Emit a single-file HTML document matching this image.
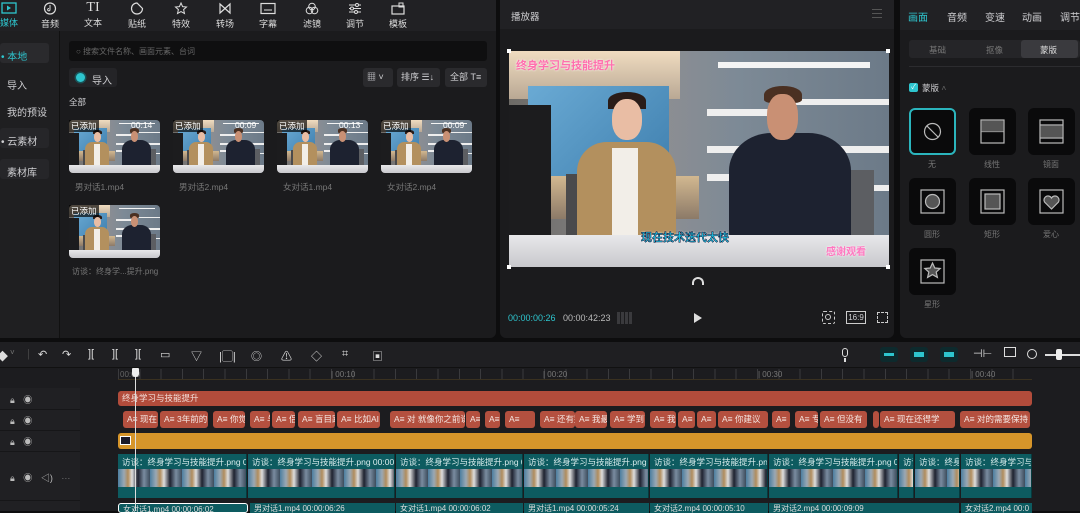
<!DOCTYPE html>
<html><head><meta charset="utf-8"><style>
*{margin:0;padding:0;box-sizing:border-box}
body{width:1080px;height:511px;overflow:hidden;background:#0d0d0e;font-family:"Liberation Sans","Noto Sans CJK SC",sans-serif;color:#cfcfd2;position:relative;font-size:10px}
.a{position:absolute}
.sc{position:absolute;overflow:hidden;background:linear-gradient(90deg,#6d6a66 0%,#8d8e92 40%,#7d8a96 60%,#6c7a88 100%)}
.sc i{position:absolute;display:block}
.tb{color:#ddd;font-size:9px;text-align:center}
.tb svg{display:block;margin:0 auto 2px}
.chip{position:absolute;top:411px;height:17px;background:#b4503f;border-radius:3px;color:#f4e6e2;font-size:8.5px;line-height:17px;padding-left:4px;white-space:nowrap;overflow:hidden}
.seg{position:absolute;top:454px;height:44px;background:#0d5b60;border-right:1px solid #063a3d;overflow:hidden}
.seg span{position:absolute;left:4px;top:2px;font-size:8.5px;color:#d8ecec;white-space:nowrap}
.seg b{position:absolute;left:0;right:0;top:15px;height:18px;background:repeating-linear-gradient(90deg,#4d7fa0 0,#9aa8b4 6px,#b08c5c 10px,#ddd 14px,#1e2230 20px,#7a8ca0 26px,#3c4c5c 32px)}
.mk{position:absolute;width:34px;height:34px;border-radius:6px;background:#0a0a0b}
.lbl{position:absolute;font-size:8px;color:#777;text-align:center;width:46px}
.ttl span{position:absolute;white-space:nowrap}
</style></head><body>

<div class="a" style="left:0;top:0;width:496px;height:338px;background:#1b1b1d;border-radius:0 0 6px 0"></div>
<div class="a" style="left:0;top:0;width:496px;height:31px;background:#212124"></div>
<div class="a" style="left:0;top:31px;width:60px;height:307px;background:#1f1f21;border-right:1px solid #111"></div>
<div class="a tb" style="left:-6px;top:2px;width:30px;color:#2ec5ce"><svg width="16" height="12"><rect x="1" y="1" width="14" height="10" fill="none" stroke="#2ec5ce" stroke-width="1.3"/><path d="M6 3.5L10 6L6 8.5Z" fill="#2ec5ce"/></svg>媒体</div>
<div class="a tb" style="left:35px;top:2px;width:30px"><svg width="14" height="13"><circle cx="7" cy="6.5" r="5.5" fill="none" stroke="#ddd" stroke-width="1.2"/><path d="M7 3v4.5a1.2 1.2 0 1 1-1-1" fill="none" stroke="#ddd"/></svg>音频</div>
<div class="a tb" style="left:78px;top:1px;width:30px"><div style="font-family:'Liberation Serif';font-size:14px;line-height:14px;height:15px">TI</div>文本</div>
<div class="a tb" style="left:122px;top:2px;width:30px"><svg width="14" height="13"><path d="M7 1a5.5 5.5 0 1 0 5.5 5.5L7 1z" fill="none" stroke="#ddd" stroke-width="1.2"/></svg>贴纸</div>
<div class="a tb" style="left:166px;top:2px;width:30px"><svg width="14" height="13"><path d="M7 1l1.6 3.6 3.9.4-2.9 2.6.9 3.9L7 9.6 3.5 11.5l.9-3.9L1.5 5l3.9-.4z" fill="none" stroke="#ddd"/></svg>特效</div>
<div class="a tb" style="left:210px;top:2px;width:30px"><svg width="14" height="13"><path d="M2 2l10 9V2L2 11z" fill="none" stroke="#ddd" stroke-width="1.2"/></svg>转场</div>
<div class="a tb" style="left:253px;top:2px;width:30px"><svg width="16" height="13"><rect x="1" y="1.5" width="14" height="10" fill="none" stroke="#ddd" stroke-width="1.2"/><path d="M4 8h8" stroke="#ddd"/></svg>字幕</div>
<div class="a tb" style="left:297px;top:2px;width:30px"><svg width="14" height="13"><circle cx="7" cy="4.5" r="3.3" fill="none" stroke="#ddd"/><circle cx="4.5" cy="8.5" r="3.3" fill="none" stroke="#ddd"/><circle cx="9.5" cy="8.5" r="3.3" fill="none" stroke="#ddd"/></svg>滤镜</div>
<div class="a tb" style="left:340px;top:2px;width:30px"><svg width="14" height="13"><path d="M1 3h12M1 6.5h12M1 10h12" stroke="#ddd"/><circle cx="9" cy="3" r="1.5" fill="#212124" stroke="#ddd"/><circle cx="4" cy="6.5" r="1.5" fill="#212124" stroke="#ddd"/><circle cx="8" cy="10" r="1.5" fill="#212124" stroke="#ddd"/></svg>调节</div>
<div class="a tb" style="left:383px;top:2px;width:30px"><svg width="14" height="13"><rect x="1" y="4" width="12" height="8" fill="none" stroke="#ddd" stroke-width="1.2"/><rect x="8" y="1" width="4" height="4" fill="none" stroke="#ddd"/></svg>模板</div>

<div class="a" style="left:0;top:43px;width:49px;height:20px;background:#2a2a2d;border-radius:3px"></div>
<div class="a" style="left:1px;top:48px;font-size:10px;color:#2ec5ce">• 本地</div>
<div class="a" style="left:7px;top:77px;font-size:10px">导入</div>
<div class="a" style="left:7px;top:104px;font-size:10px">我的预设</div>
<div class="a" style="left:0;top:128px;width:49px;height:20px;background:#262629;border-radius:3px"></div>
<div class="a" style="left:1px;top:133px;font-size:10px">• 云素材</div>
<div class="a" style="left:0;top:159px;width:49px;height:20px;background:#262629;border-radius:3px"></div>
<div class="a" style="left:7px;top:164px;font-size:10px">素材库</div>

<div class="a" style="left:69px;top:41px;width:418px;height:20px;background:#0f0f10;border-radius:3px"></div>
<div class="a" style="left:76px;top:46px;font-size:8px;color:#666">○ 搜索文件名称、画面元素、台词</div>
<div class="a" style="left:69px;top:68px;width:48px;height:19px;background:#242427;border-radius:3px"></div>
<div class="a" style="left:76px;top:73px;width:9px;height:9px;border-radius:50%;background:#2ec5ce;box-shadow:0 0 0 1.5px #1a5358"></div>
<div class="a" style="left:92px;top:72px;font-size:10px">导入</div>
<div class="a" style="left:363px;top:68px;width:30px;height:19px;background:#2a2a2d;border-radius:3px;font-size:9px;line-height:19px;padding-left:4px">▦ ˅</div>
<div class="a" style="left:397px;top:68px;width:43px;height:19px;background:#2a2a2d;border-radius:3px;font-size:9px;line-height:19px;padding-left:4px">排序 ☰↓</div>
<div class="a" style="left:445px;top:68px;width:42px;height:19px;background:#2a2a2d;border-radius:3px;font-size:9px;line-height:19px;padding-left:5px">全部 T≡</div>
<div class="a" style="left:69px;top:96px;font-size:8.5px">全部</div>

<div id="thumbs"></div>

<div class="a" style="left:500px;top:0;width:394px;height:338px;background:#1b1b1d;border-radius:0 0 6px 6px"></div>
<div class="a" style="left:500px;top:0;width:394px;height:29px;background:#212124"></div>
<div class="a" style="left:511px;top:9px;font-size:9.5px">播放器</div>
<div class="a" style="left:872px;top:9px;width:10px;height:9px;border-top:1px solid #555;border-bottom:1px solid #555"><div style="margin-top:3px;border-top:1px solid #555"></div></div>
<div id="player"></div>
<div class="a" style="left:692px;top:277px;width:12px;height:8px;border-radius:6px 6px 0 0;border:2px solid #ddd;border-bottom:none"></div>
<div class="a" style="left:508px;top:313px;font-size:9px;color:#2ec5ce">00:00:00:26</div>
<div class="a" style="left:563px;top:313px;font-size:9px;color:#bbb">00:00:42:23</div>
<div class="a" style="left:617px;top:312px;width:16px;height:12px;background:repeating-linear-gradient(90deg,#3a3a3d 0 3px,transparent 3px 4px)"></div>
<div class="a" style="left:694px;top:313px;width:0;height:0;border-left:8px solid #ddd;border-top:5px solid transparent;border-bottom:5px solid transparent"></div>
<div class="a" style="left:822px;top:311px;width:13px;height:13px;border:1.5px dashed #ccc;border-radius:2px"><div style="margin:2px;width:6px;height:6px;border:1.3px solid #ccc;border-radius:50%"></div></div>
<div class="a" style="left:846px;top:311px;width:20px;height:13px;border:1px solid #ccc;font-size:8px;line-height:11px;text-align:center">16:9</div>
<div class="a" style="left:877px;top:312px;width:11px;height:11px;border:1.5px dashed #ccc"></div>

<div class="a" style="left:900px;top:0;width:180px;height:338px;background:#1b1b1d;border-radius:0 0 0 6px"></div>
<div class="a" style="left:900px;top:0;width:180px;height:30px;background:#212124"></div>
<div class="a" style="left:908px;top:9px;font-size:10px;color:#2ec5ce">画面</div>
<div class="a" style="left:947px;top:9px;font-size:10px">音频</div>
<div class="a" style="left:985px;top:9px;font-size:10px">变速</div>
<div class="a" style="left:1022px;top:9px;font-size:10px">动画</div>
<div class="a" style="left:1060px;top:9px;font-size:10px">调节</div>
<div class="a" style="left:909px;top:40px;width:171px;height:18px;background:#252528;border-radius:3px"></div>
<div class="a" style="left:1021px;top:40px;width:57px;height:18px;background:#3a3a3e;border-radius:3px"></div>
<div class="a" style="left:929px;top:44px;font-size:8.5px;color:#777">基础</div>
<div class="a" style="left:986px;top:44px;font-size:8.5px;color:#777">抠像</div>
<div class="a" style="left:1040px;top:44px;font-size:8.5px;color:#ddd">蒙版</div>
<div class="a" style="left:909px;top:66px;width:171px;height:1px;background:#2c2c2f"></div>
<div class="a" style="left:909px;top:83px;width:9px;height:9px;background:#2ec5ce;border-radius:2px;color:#fff;font-size:7px;line-height:9px;text-align:center">✓</div>
<div class="a" style="left:922px;top:82px;font-size:8.5px">蒙版 <span style="color:#666">˄</span></div>

<div class="mk" style="left:909px;top:108px;width:47px;height:47px;border:2px solid #2bb5bd"></div>
<div class="mk" style="left:969px;top:108px;width:47px;height:47px"></div>
<div class="mk" style="left:1028px;top:108px;width:47px;height:47px"></div>
<div class="mk" style="left:909px;top:178px;width:47px;height:47px"></div>
<div class="mk" style="left:969px;top:178px;width:47px;height:47px"></div>
<div class="mk" style="left:1028px;top:178px;width:47px;height:47px"></div>
<div class="mk" style="left:909px;top:248px;width:47px;height:47px"></div>
<svg class="a" style="left:909px;top:108px" width="171" height="190">
<g fill="none" stroke="#bbb" stroke-width="1.2">
<circle cx="23.5" cy="23.5" r="8"/><path d="M18 18l11 11"/>
<rect x="72" y="12" width="23" height="23"/><path d="M72 23.5h23"/><rect x="72.5" y="12.5" width="22" height="11" fill="#555" stroke="none"/>
<rect x="131" y="12" width="23" height="23"/><path d="M131 17h23M131 30h23"/><rect x="131.5" y="17.5" width="22" height="12" fill="#555" stroke="none"/>
<rect x="12" y="82" width="23" height="23"/><circle cx="23.5" cy="93.5" r="7" fill="#555"/>
<rect x="72" y="82" width="23" height="23"/><rect x="76" y="86" width="15" height="15" fill="#555"/>
<rect x="131" y="82" width="23" height="23"/><path d="M142.5 101l-7-7a3.5 3.5 0 0 1 7-4 3.5 3.5 0 0 1 7 4z" fill="#555"/>
<rect x="12" y="152" width="23" height="23"/><path d="M23.5 155l2.3 5 5.4.5-4 3.6 1.2 5.3-4.9-2.8-4.9 2.8 1.2-5.3-4-3.6 5.4-.5z" fill="#555"/>
</g></svg>
<div class="lbl" style="left:909px;top:159px">无</div>
<div class="lbl" style="left:969px;top:159px">线性</div>
<div class="lbl" style="left:1028px;top:159px">镜面</div>
<div class="lbl" style="left:909px;top:229px">圆形</div>
<div class="lbl" style="left:969px;top:229px">矩形</div>
<div class="lbl" style="left:1028px;top:229px">爱心</div>
<div class="lbl" style="left:909px;top:299px">星形</div>

<div class="a" style="left:0;top:342px;width:1080px;height:169px;background:#1c1c1f"></div>
<div class="a" style="left:0;top:342px;width:1080px;height:26px;background:#1f1f22;border-bottom:1px solid #111"></div>
<div class="a ttl" style="left:0;top:348px;width:400px;height:14px;font-size:11px;color:#ddd">
<span style="left:-3px">◆</span><span style="left:10px;color:#777;font-size:8px">˅</span><span style="left:27px;color:#444">|</span>
<span style="left:38px">↶</span><span style="left:62px">↷</span>
<span style="left:88px">][</span><span style="left:112px">][</span><span style="left:135px">][</span>
<span style="left:160px">▭</span><span style="left:191px">▽</span><span style="left:219px">|▢|</span>
<span style="left:251px">◎</span><span style="left:281px">⚠</span><span style="left:311px">◇</span><span style="left:342px">⌗</span><span style="left:372px">▣</span>
</div>
<div class="a" style="left:842px;top:348px;width:6px;height:9px;border:1.3px solid #ddd;border-radius:3px"></div>
<div class="a" style="left:844px;top:358px;width:2px;height:4px;background:#ddd"></div>
<div class="a" style="left:880px;top:347px;width:18px;height:15px;background:#0d2a2d;border-radius:3px"></div>
<div class="a" style="left:910px;top:347px;width:18px;height:15px;background:#0d2a2d;border-radius:3px"></div>
<div class="a" style="left:940px;top:347px;width:18px;height:15px;background:#0d2a2d;border-radius:3px"></div>
<div class="a" style="left:884px;top:353px;width:10px;height:3px;background:#2ec5ce"></div>
<div class="a" style="left:914px;top:352px;width:10px;height:5px;background:#2ec5ce"></div>
<div class="a" style="left:944px;top:352px;width:10px;height:5px;background:#2ec5ce"></div>
<div class="a" style="left:973px;top:347px;font-size:11px;color:#ddd;white-space:nowrap">⊣⊢</div>
<div class="a" style="left:1004px;top:347px;width:12px;height:10px;border:1.2px solid #ddd"></div>
<div class="a" style="left:1027px;top:349px;width:10px;height:10px;border:1.2px solid #ddd;border-radius:50%"></div>
<div class="a" style="left:1045px;top:354px;width:35px;height:1.5px;background:#ddd"></div>
<div class="a" style="left:1056px;top:349px;width:6px;height:11px;background:#eee;border-radius:2px"></div>

<div class="a" style="left:0;top:388px;width:80px;height:123px;background:#202023"></div>
<div class="a" style="left:0;top:409px;width:80px;height:1px;background:#161618"></div>
<div class="a" style="left:0;top:430px;width:80px;height:1px;background:#161618"></div>
<div class="a" style="left:0;top:451px;width:80px;height:1px;background:#161618"></div>
<div class="a" style="left:0;top:500px;width:80px;height:1px;background:#161618"></div>
<div class="a" style="left:10px;top:393px;font-size:9px;color:#bbb">🔒︎ <span style="margin-left:6px">◉</span></div>
<div class="a" style="left:10px;top:414px;font-size:9px;color:#bbb">🔒︎ <span style="margin-left:6px">◉</span></div>
<div class="a" style="left:10px;top:435px;font-size:9px;color:#bbb">🔒︎ <span style="margin-left:6px">◉</span></div>
<div class="a" style="left:10px;top:471px;font-size:9px;color:#bbb;white-space:nowrap">🔒︎ <span style="margin-left:6px">◉</span> <span style="margin-left:6px">◁)</span> <span style="margin-left:6px;color:#777">···</span></div>

<div class="a" style="left:118px;top:369px;width:914px;height:11px;border-bottom:1px solid #3a3120;background:repeating-linear-gradient(90deg,#3a3a3d 0 1px,transparent 1px 21.3px)"></div>
<div class="a" style="left:120px;top:370px;font-size:8px;color:#666">00:00</div>
<div class="a" style="left:331px;top:370px;font-size:8px;color:#777">| 00:10</div>
<div class="a" style="left:543px;top:370px;font-size:8px;color:#777">| 00:20</div>
<div class="a" style="left:758px;top:370px;font-size:8px;color:#777">| 00:30</div>
<div class="a" style="left:971px;top:370px;font-size:8px;color:#777">| 00:40</div>

<div class="a" style="left:118px;top:391px;width:914px;height:15px;background:#b24c3b;border-radius:3px;font-size:8.5px;color:#f2ddd8;line-height:15px;padding-left:4px">终身学习与技能提升</div>
<div id="chips"></div>
<div class="a" style="left:118px;top:433px;width:914px;height:16px;background:#d6952a;border-radius:3px"></div>
<div class="a" style="left:120px;top:436px;width:11px;height:9px;background:#1a1a2a;border:1px solid #fff"></div>
<div id="segs"></div>
<div class="a" style="left:118px;top:503px;width:130px;height:10px;background:#0d5b60;border:1.5px solid #fff;border-radius:3px;font-size:8px;color:#ddd;padding-left:4px;white-space:nowrap;overflow:hidden">女对话1.mp4 00:00:06:02</div>
<div class="a" style="left:250px;top:503px;width:145px;height:10px;background:#0d5b60;font-size:8px;color:#ddd;padding-left:4px;white-space:nowrap;overflow:hidden">男对话1.mp4 00:00:06:26</div>
<div class="a" style="left:396px;top:503px;width:127px;height:10px;background:#0d5b60;font-size:8px;color:#ddd;padding-left:4px;white-space:nowrap;overflow:hidden">女对话1.mp4 00:00:06:02</div>
<div class="a" style="left:524px;top:503px;width:125px;height:10px;background:#0d5b60;font-size:8px;color:#ddd;padding-left:4px;white-space:nowrap;overflow:hidden">男对话1.mp4 00:00:05:24</div>
<div class="a" style="left:650px;top:503px;width:118px;height:10px;background:#0d5b60;font-size:8px;color:#ddd;padding-left:4px;white-space:nowrap;overflow:hidden">女对话2.mp4 00:00:05:10</div>
<div class="a" style="left:769px;top:503px;width:190px;height:10px;background:#0d5b60;font-size:8px;color:#ddd;padding-left:4px;white-space:nowrap;overflow:hidden">男对话2.mp4 00:00:09:09</div>
<div class="a" style="left:961px;top:503px;width:71px;height:10px;background:#0d5b60;font-size:8px;color:#ddd;padding-left:4px;white-space:nowrap;overflow:hidden">女对话2.mp4 00:0</div>
<div class="a" style="left:135px;top:369px;width:1px;height:142px;background:#ddd"></div>
<div class="a" style="left:132px;top:368px;width:7px;height:9px;background:#eee;border-radius:1px 1px 3px 3px"></div>

<script>
function scene(x,y,w,h,r){
return `<div class="sc" style="left:${x}px;top:${y}px;width:${w}px;height:${h}px;border-radius:${r}px">
<i style="left:0;top:0;width:45%;height:22%;background:linear-gradient(#f0dcc0,#b9a894)"></i>
<i style="left:5%;top:16%;width:37%;height:45%;background:linear-gradient(135deg,#6aaad4,#3f7fae)"></i>
<i style="left:0;top:58%;width:50%;height:20%;background:linear-gradient(#d2b890,#8c7a68)"></i>
<i style="left:55%;top:5%;width:40%;height:3%;background:#f4f4f4"></i>
<i style="left:52%;top:27%;width:20%;height:3%;background:#eee"></i>
<i style="left:70%;top:22%;width:30%;height:3%;background:#eee"></i>
<i style="left:52%;top:44%;width:48%;height:3%;background:#eee"></i>
<i style="left:52%;top:57%;width:18%;height:3%;background:#eee"></i>
<i style="left:88%;top:62%;width:12%;height:3%;background:#eee"></i>
<i style="left:0;top:25%;width:11%;height:70%;background:#1c1c1e"></i>
<i style="left:15%;top:57%;width:20%;height:30%;background:#4a4a4c"></i>
<i style="left:78%;top:55%;width:18%;height:30%;background:#5c5e62"></i>
<i style="left:18%;top:42%;width:26%;height:46%;background:#b3905e;border-radius:30% 30% 0 0"></i>
<i style="left:27%;top:45%;width:7%;height:40%;background:#f2eee8"></i>
<i style="left:26%;top:19%;width:10%;height:8%;background:#2a1c18;border-radius:50% 50% 0 0"></i>
<i style="left:27%;top:22%;width:8%;height:19%;background:#e9bda4;border-radius:45%"></i>
<i style="left:58%;top:38%;width:32%;height:50%;background:#1d2230;border-radius:35% 35% 0 0"></i>
<i style="left:67%;top:16%;width:10%;height:8%;background:#4a3022;border-radius:50% 50% 20% 20%"></i>
<i style="left:68%;top:20%;width:8%;height:21%;background:#c99074;border-radius:45%"></i>
<i style="left:0;top:85%;width:100%;height:15%;background:linear-gradient(#e8e8ea,#c8c8cc)"></i>
</div>`}
let t='';
const names=['男对话1.mp4','男对话2.mp4','女对话1.mp4','女对话2.mp4'];
const durs=['00:14','00:09','00:13','00:09'];
[69,173,277,381].forEach((x,i)=>{t+=scene(x,120,91,53,4)+`<div class="a" style="left:${x}px;top:120px;background:#000a;color:#fff;font-size:8.5px;padding:0 2px">已添加</div><div class="a" style="left:${x+62}px;top:120px;color:#fff;font-size:8.5px">${durs[i]}</div><div class="a" style="left:${x+6}px;top:181px;font-size:8.5px;color:#777">${names[i]}</div>`});
t+=scene(69,205,91,53,4)+`<div class="a" style="left:69px;top:205px;background:#000a;color:#fff;font-size:8.5px;padding:0 2px">已添加</div><div class="a" style="left:72px;top:266px;font-size:8px;color:#777">访谈：终身学...提升.png</div>`;
document.getElementById('thumbs').innerHTML=t;
document.getElementById('player').innerHTML=scene(509,51,380,216,0)+
`<div class="a" style="left:516px;top:57px;font-size:11px;font-weight:bold;color:#ff6fae;text-shadow:0 0 2px #fff">终身学习与技能提升</div>
<div class="a" style="left:641px;top:229px;font-size:11px;font-weight:bold;color:#1ec0e0;-webkit-text-stroke:0.5px #113;text-shadow:0 0 2px #fff">现在技术迭代太快</div>
<div class="a" style="left:826px;top:243px;font-size:10px;font-weight:bold;color:#ff77c0;text-shadow:0 0 2px #fff">感谢观看</div>
<div class="a" style="left:507px;top:49px;width:4px;height:4px;background:#fff"></div><div class="a" style="left:886px;top:49px;width:4px;height:4px;background:#fff"></div><div class="a" style="left:507px;top:265px;width:4px;height:4px;background:#fff"></div><div class="a" style="left:886px;top:265px;width:4px;height:4px;background:#fff"></div>`;
const chips=[[123,35,'现在'],[160,48,'3年前的'],[213,32,'你觉'],[250,20,'与'],[272,23,'侣'],[298,37,'盲目跟风'],[337,43,'比如AI'],[390,75,'对 就像你之前说'],[466,14,''],[485,15,''],[505,30,''],[540,35,'还有别'],[575,32,'我最近'],[610,35,'学到了'],[650,26,'我认'],[678,17,''],[697,19,''],[718,50,'你建议'],[772,18,''],[795,23,'专业'],[820,47,'但没有'],[873,6,''],[880,75,'现在还得学'],[960,70,'对的需要保持']];
let c='';chips.forEach(([x,w,s])=>{c+=`<div class="chip" style="left:${x}px;width:${w}px">${w>12?'A≡ ':''}${s}</div>`});
document.getElementById('chips').innerHTML=c;
const segs=[[118,129],[248,147],[396,127],[524,125],[650,118],[769,129],[899,15],[915,45],[961,71]];
let s='';segs.forEach(([x,w])=>{s+=`<div class="seg" style="left:${x}px;width:${w}px"><span>访谈：终身学习与技能提升.png 00:00:0</span><b></b></div>`});
document.getElementById('segs').innerHTML=s;
</script>
</body></html>
